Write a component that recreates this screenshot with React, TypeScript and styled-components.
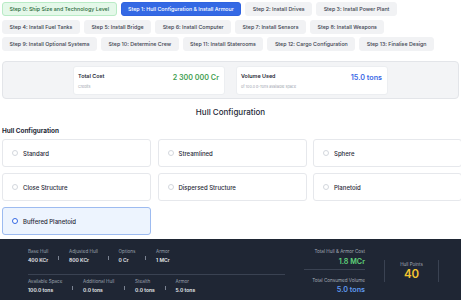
import React from 'react';
import styled, {createGlobalStyle} from 'styled-components';

const GlobalStyle = createGlobalStyle`
  html, body {
    margin: 0;
    padding: 0;
    background: #ffffff;
    overflow: hidden;
  }
  body {
    font-family: Inter, "Noto Sans", "Liberation Sans", sans-serif;
    color: #1f2937;
  }
`;

const steps = [
  'Step 0: Ship Size and Technology Level',
  'Step 1: Hull Configuration & Install Armour',
  'Step 2: Install Drives',
  'Step 3: Install Power Plant',
  'Step 4: Install Fuel Tanks',
  'Step 5: Install Bridge',
  'Step 6: Install Computer',
  'Step 7: Install Sensors',
  'Step 8: Install Weapons',
  'Step 9: Install Optional Systems',
  'Step 10: Determine Crew',
  'Step 11: Install Staterooms',
  'Step 12: Cargo Configuration',
  'Step 13: Finalise Design',
];

const hulls = [
  'Standard',
  'Streamlined',
  'Sphere',
  'Close Structure',
  'Dispersed Structure',
  'Planetoid',
  'Buffered Planetoid',
];

type TabState = 'done' | 'active' | 'idle';

const Page = styled.div`
  padding: 2px 2px 0 2px;
  display: flex;
  flex-direction: column;
`;

const StepBar = styled.div`
  display: flex;
  flex-wrap: wrap;
  gap: 3.5px 4px;
  width: 457px;
`;

const StepTab = styled.button<{$state: TabState}>`
  height: 14px;
  padding: 0 6.5px;
  border-radius: 3px;
  font-family: inherit;
  font-size: 5.3px;
  font-weight: 500;
  white-space: nowrap;
  cursor: pointer;
  border: 0.5px solid ${p => p.$state === 'done' ? '#b9ebc6' : p.$state === 'active' ? '#2f63e0' : '#f1f2f4'};
  background: ${p => p.$state === 'done' ? '#e4f8e9' : p.$state === 'active' ? '#3469e4' : '#f1f2f4'};
  color: ${p => p.$state === 'done' ? '#2a6a3a' : p.$state === 'active' ? '#ffffff' : '#3b4250'};
`;

const Summary = styled.div`
  margin-top: 10px;
  background: #f3f4f6;
  border: 0.5px solid #e3e5e9;
  border-radius: 4px;
  padding: 3.5px 0;
  display: flex;
  justify-content: center;
  gap: 11px;
`;

const StatCard = styled.div`
  width: 152px;
  height: 29px;
  box-sizing: border-box;
  background: #ffffff;
  border: 0.5px solid #eceef1;
  border-radius: 3px;
  padding: 6px 5px 0 4px;
  display: flex;
  justify-content: space-between;
`;

const StatText = styled.div`
  display: flex;
  flex-direction: column;
  gap: 4px;
`;

const StatTitle = styled.div`
  font-size: 5.4px;
  line-height: 7px;
  font-weight: 600;
  color: #1f2937;
`;

const StatSub = styled.div`
  font-size: 3.7px;
  line-height: 5px;
  color: #9aa1ac;
`;

const StatValue = styled.div<{$color: string}>`
  font-size: 7.2px;
  line-height: 9px;
  font-weight: 600;
  color: ${p => p.$color};
`;

const PageTitle = styled.h2`
  margin: 8px 0 0 0;
  text-align: center;
  font-size: 8px;
  line-height: 10px;
  font-weight: 500;
  color: #1f2937;
`;

const SectionLabel = styled.h3`
  margin: 10px 0 0 0;
  font-size: 6.4px;
  line-height: 8px;
  font-weight: 700;
  color: #1f2937;
`;

const OptionGrid = styled.div`
  margin-top: 4px;
  display: grid;
  grid-template-columns: repeat(3, 149px);
  column-gap: 6.5px;
  row-gap: 6px;
`;

const OptionCard = styled.label<{$selected: boolean}>`
  height: 28px;
  box-sizing: border-box;
  display: flex;
  align-items: center;
  gap: 5px;
  padding-left: 9px;
  border-radius: 3px;
  border: 0.5px solid ${p => p.$selected ? '#9dbbf0' : '#e6e8ec'};
  background: ${p => p.$selected ? '#edf4fe' : '#ffffff'};
  font-size: 6px;
  font-weight: 500;
  color: #1f2937;
`;

const Radio = styled.span<{$checked: boolean}>`
  width: 6px;
  height: 6px;
  box-sizing: border-box;
  border-radius: 50%;
  flex-shrink: 0;
  background: #ffffff;
  border: ${p => p.$checked ? '1.7px solid #3469e4' : '0.5px solid #d3d7dd'};
`;

const Footer = styled.footer`
  margin: 4px -2px 0 -2px;
  background: #1f2634;
  height: 62px;
  padding: 10px 0 0 28px;
  box-sizing: border-box;
  display: flex;
  align-items: flex-start;
`;

const Breakdown = styled.div`
  width: 257px;
  display: flex;
  flex-direction: column;
`;

const BreakdownRow = styled.div<{$last?: boolean}>`
  display: flex;
  align-items: center;
  gap: 10px;
  padding: ${p => p.$last ? '4px 0 0 0' : '0 0 10px 0'};
  border-bottom: ${p => p.$last ? 'none' : '0.5px solid #3a4252'};
`;

const Item = styled.div`
  display: flex;
  flex-direction: column;
  gap: 2px;
`;

const ItemLabel = styled.span`
  font-size: 4.6px;
  line-height: 6px;
  color: #9aa1ad;
`;

const ItemValue = styled.span`
  font-size: 5px;
  line-height: 7px;
  font-weight: 600;
  color: #e8eaee;
`;

const Pipe = styled.span`
  width: 0.7px;
  height: 4px;
  background: #7b8392;
  margin-top: 2px;
`;

const Totals = styled.div`
  margin-left: 19px;
  width: 61px;
  display: flex;
  flex-direction: column;
  align-items: stretch;
  text-align: right;
`;

const TotalBlock = styled.div<{$first?: boolean}>`
  display: flex;
  flex-direction: column;
  gap: 1.5px;
  padding: ${p => p.$first ? '0 0 3px 0' : '8px 0 0 0'};
  border-bottom: ${p => p.$first ? '0.5px solid #3a4252' : 'none'};
`;

const TotalLabel = styled.span`
  font-size: 4.6px;
  line-height: 6px;
  color: #a3aab5;
  white-space: nowrap;
`;

const TotalValue = styled.span<{$color: string}>`
  font-size: 7.2px;
  line-height: 9px;
  font-weight: 600;
  color: ${p => p.$color};
`;

const HullPoints = styled.div`
  margin: 11px 0 0 19px;
  width: 53px;
  height: 22px;
  border-left: 0.5px solid #3a4252;
  border-right: 0.5px solid #3a4252;
  display: flex;
  flex-direction: column;
  align-items: center;
  justify-content: center;
`;

const HpLabel = styled.span`
  font-size: 4.5px;
  line-height: 6px;
  color: #a3aab5;
`;

const HpValue = styled.span`
  font-size: 11.5px;
  line-height: 12px;
  font-weight: 600;
  color: #f4c531;
`;

const Stat = ({label, value}: {label: string; value: string}) => (
  <Item>
    <ItemLabel>{label}</ItemLabel>
    <ItemValue>{value}</ItemValue>
  </Item>
);

const App = () => {
  const selected = 'Buffered Planetoid';
  return (
    <>
      <GlobalStyle/>
      <Page>
        <StepBar>
          {steps.map((s, i) => (
            <StepTab key={s} $state={i === 0 ? 'done' : i === 1 ? 'active' : 'idle'}>{s}</StepTab>
          ))}
        </StepBar>

        <Summary>
          <StatCard>
            <StatText>
              <StatTitle>Total Cost</StatTitle>
              <StatSub>Credits</StatSub>
            </StatText>
            <StatValue $color="#3f9e51">2 300 000 Cr</StatValue>
          </StatCard>
          <StatCard>
            <StatText>
              <StatTitle>Volume Used</StatTitle>
              <StatSub>of 100.0 d-Tons available space</StatSub>
            </StatText>
            <StatValue $color="#3a68e6">15.0 tons</StatValue>
          </StatCard>
        </Summary>

        <PageTitle>Hull Configuration</PageTitle>
        <SectionLabel>Hull Configuration</SectionLabel>
        <OptionGrid>
          {hulls.map(h => (
            <OptionCard key={h} $selected={h === selected}>
              <Radio $checked={h === selected}/>
              {h}
            </OptionCard>
          ))}
        </OptionGrid>

        <Footer>
          <Breakdown>
            <BreakdownRow>
              <Stat label="Base Hull" value="400 KCr"/>
              <Pipe/>
              <Stat label="Adjusted Hull" value="800 KCr"/>
              <Pipe/>
              <Stat label="Options" value="0 Cr"/>
              <Pipe/>
              <Stat label="Armor" value="1 MCr"/>
            </BreakdownRow>
            <BreakdownRow $last>
              <Stat label="Available Space" value="100.0 tons"/>
              <Pipe/>
              <Stat label="Additional Hull" value="0.0 tons"/>
              <Pipe/>
              <Stat label="Stealth" value="0.0 tons"/>
              <Pipe/>
              <Stat label="Armor" value="5.0 tons"/>
            </BreakdownRow>
          </Breakdown>
          <Totals>
            <TotalBlock $first>
              <TotalLabel>Total Hull &amp; Armor Cost</TotalLabel>
              <TotalValue $color="#5fd27a">1.8 MCr</TotalValue>
            </TotalBlock>
            <TotalBlock>
              <TotalLabel>Total Consumed Volume</TotalLabel>
              <TotalValue $color="#5f9af0">5.0 tons</TotalValue>
            </TotalBlock>
          </Totals>
          <HullPoints>
            <HpLabel>Hull Points</HpLabel>
            <HpValue>40</HpValue>
          </HullPoints>
        </Footer>
      </Page>
    </>
  );
};

export default App;
